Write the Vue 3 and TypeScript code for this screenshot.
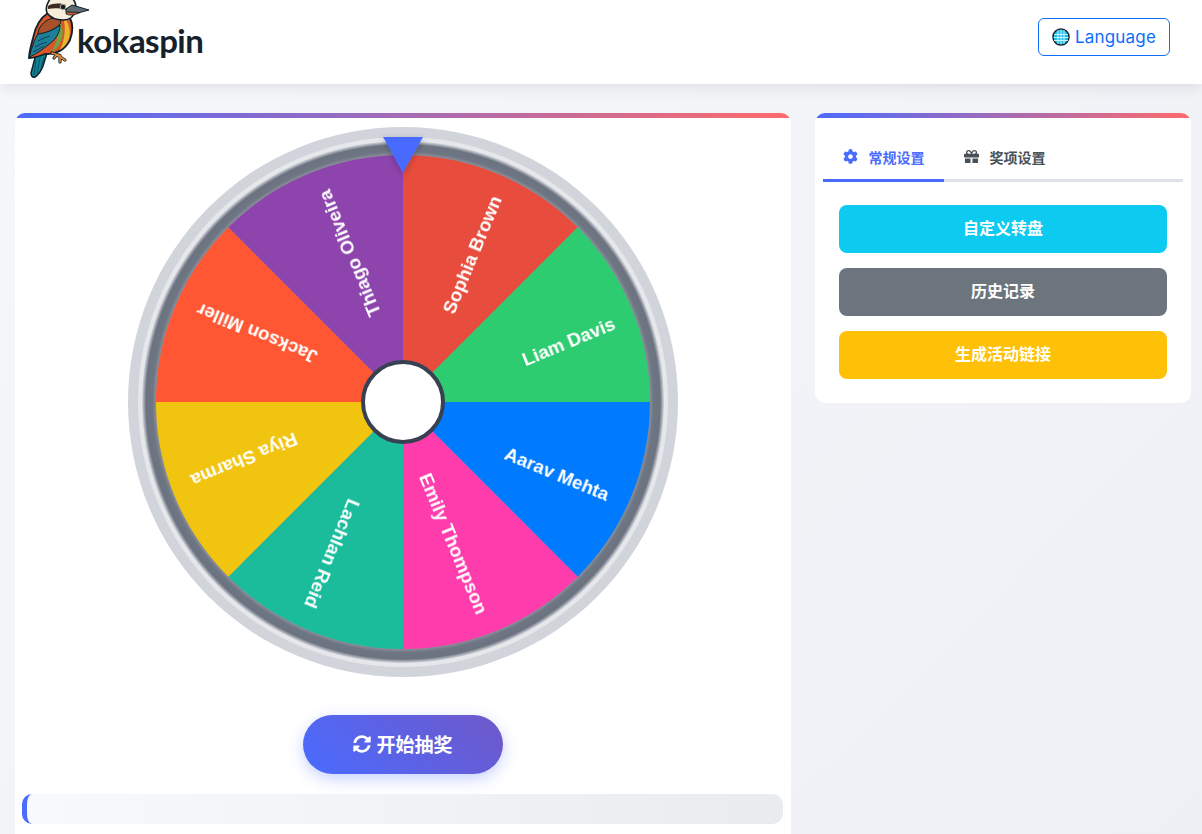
<script setup lang="ts">
interface Seg { name: string; color: string }
const segs: Seg[] = [
  { name: 'Sophia Brown', color: '#e74c3c' },
  { name: 'Liam Davis', color: '#2ecc71' },
  { name: 'Aarav Mehta', color: '#007bff' },
  { name: 'Emily Thompson', color: '#ff3cac' },
  { name: 'Lachlan Reid', color: '#1abc9c' },
  { name: 'Riya Sharma', color: '#f1c40f' },
  { name: 'Jackson Miller', color: '#ff5733' },
  { name: 'Thiago Oliveira', color: '#8e44ad' },
]
const R = 247
function pt(deg: number): string {
  const a = (deg * Math.PI) / 180
  return `${(R * Math.cos(a)).toFixed(2)} ${(R * Math.sin(a)).toFixed(2)}`
}
const sectors = segs.map((s, i) => {
  const start = -90 + i * 45
  return {
    ...s,
    d: `M0 0 L${pt(start)} A${R} ${R} 0 0 1 ${pt(start + 45)} Z`,
    rot: `rotate(${start + 22.5})`,
  }
})
const tabs = ['常规设置', '奖项设置']
</script>

<template>
  <div class="page">
    <header class="topbar">
      <div class="brand">
        <svg class="bird" width="66" height="80" viewBox="24 0 66 80">
          <path d="M36 54 31 73Q31 78 35 77 40 74 43 66L47 53Z" fill="#0f8494" stroke="#10212b" stroke-width="1.500"/>
          <path d="M36 60 34 75M40 58 37 74M44 57 41 69" stroke="#0b4f62" stroke-width="1" fill="none"/>
          <path d="M48 13C40 18 35 28 33 38 31 46 29 52 29 58 34 58 40 56 45 54 55 55 65 50 70 40 73 32 73 24 70 18Z" fill="#d9562a" stroke="#10212b" stroke-width="1.800"/>
          <path d="M66 20C70 26 71 34 68 41 66 45 63 48 60 50 64 42 66 30 64 21Z" fill="#e9b52f"/>
          <path d="M60 22C65 30 63 42 55 50L51 52C57 44 60 32 57 23Z" fill="#6fa544"/>
          <path d="M38 32C40 25 46 19 54 18 59 18 62 20 60 24 56 29 46 33 38 36Z" fill="#a8502a" stroke="#10212b" stroke-width="1"/>
          <path d="M29.500 57C32 46 35 38 38 34 46 33 54 30 60 25 60 34 55 40 48 45 42 50 36 54 29.500 57Z" fill="#1e7f99" stroke="#10212b" stroke-width="1"/>
          <path d="M38 41 44 38 50 36M35 47 41 44 47 42M33 52 39 49 44 46" stroke="#0e4258" stroke-width="1" fill="none"/>
          <path d="M52 53 60 55.500M57 55 65 60M60 56 60 62M57 54.500 54 58" stroke="#10212b" stroke-width="3.200" fill="none" stroke-linecap="round"/>
          <path d="M52 53 60 55.500M57 55 65 60M60 56 60 62M57 54.500 54 58" stroke="#e38a35" stroke-width="1.600" fill="none" stroke-linecap="round"/>
          <path d="M47 5C49 0 50-2 52-2L72-2C76 2 77 8 74 14 72 18 68 20 63 20 56 20 50 17 47 13 46 10 46 8 47 5Z" fill="#f6eeda" stroke="#10212b" stroke-width="1.600"/>
          <path d="M48 6C53 3 60 3 66 5L66 10C60 8 54 8 48 9Z" fill="#3c2b20"/>
          <circle cx="63" cy="7" r="2.800" fill="#10212b" stroke="#d9cdb0" stroke-width=".8"/>
          <path d="M66 9 72 5 89 10 78 13 66 12Z" fill="#5d6b73" stroke="#10212b" stroke-width="1"/>
          <path d="M66 12 80 12.500C76 15 70 16 66 14Z" fill="#c8612d" stroke="#10212b" stroke-width=".8"/>
        </svg>
        <span class="wordmark">kokaspin</span>
      </div>
      <button class="lang" type="button">
        <svg width="18" height="18" viewBox="0 0 18 18" class="globe">
          <circle cx="9" cy="9" r="8" fill="#1ec2ee" stroke="#10212b" stroke-width="1.500"/>
          <path d="M2 6.500h14M1.500 9.500h15M2 12.500h14M6 2v14M9 1.500v15M12 2v14" stroke="#d8f6ff" stroke-width=".9" fill="none"/>
        </svg>
        Language
      </button>
    </header>

    <main class="content">
      <section class="card wheel-card">
        <svg class="wheel" width="552" height="552" viewBox="-276 -276 552 552">
          <defs>
            <radialGradient id="rim" gradientUnits="userSpaceOnUse" cx="0" cy="0" r="261">
              <stop offset="0.945" stop-color="#8d929c"/>
              <stop offset="0.96" stop-color="#6f7683"/>
              <stop offset="0.985" stop-color="#6b7280"/>
              <stop offset="1" stop-color="#d5d8dd"/>
            </radialGradient>
            <filter id="txt" x="-10%" y="-30%" width="120%" height="160%">
              <feGaussianBlur stdDeviation="0.350"/>
            </filter>
            <filter id="pshadow" x="-40%" y="-40%" width="180%" height="180%">
              <feDropShadow dx="0" dy="2" stdDeviation="3" flood-color="#000" flood-opacity="0.25"/>
            </filter>
          </defs>
          <circle r="275" fill="#d1d5db"/>
          <circle r="265" fill="#e5e7eb"/>
          <circle r="261" fill="url(#rim)"/>
          <path v-for="s in sectors" :key="s.name" :d="s.d" :fill="s.color"/>
          <g v-for="s in sectors" :key="s.name + 't'" :transform="s.rot">
            <text class="seg-text" x="225.500" y="14" text-anchor="end" filter="url(#txt)">{{ s.name }}</text>
          </g>
          <circle r="40" fill="#fff" stroke="#374151" stroke-width="4"/>
          <path d="M-20 -265h40L0 -229z" fill="#4a6bff" filter="url(#pshadow)"/>
        </svg>
        <button class="spin" type="button">
          <svg width="18" height="18" viewBox="0 0 512 512"><path fill="#fff" d="M370.700 133.300C339.500 104 298.900 88 255.800 88c-77.500.1-144.300 53.200-162.800 126.900-1.300 5.400-6.100 9.200-11.700 9.200H24.100c-7.500 0-13.200-6.800-11.800-14.200C33.900 94.900 134.800 8 256 8c66.400 0 126.800 26.100 171.300 68.700L463 41c15.100-15.100 41-4.400 41 17v134c0 13.300-10.700 24-24 24H346c-21.400 0-32.100-25.900-17-41zM32 296h134c21.400 0 32.100 25.900 17 41l-41.800 41.800c31.300 29.300 71.900 45.300 115 45.200 77.400-.1 144.300-53.100 162.800-126.800 1.300-5.400 6.100-9.200 11.700-9.200h57.300c7.500 0 13.200 6.800 11.800 14.200C478.100 417.100 377.200 504 256 504c-66.400 0-126.800-26.100-171.300-68.700L49 471c-15.100 15.100-41 4.400-41-17V320c0-13.300 10.700-24 24-24z"/></svg>
          <span>开始抽奖</span>
        </button>
        <div class="progress"></div>
      </section>

      <aside class="card side-card">
        <div class="tabs">
          <div class="tab active">
            <svg width="15" height="15" viewBox="0 0 512 512"><path fill="currentColor" d="M487.400 315.700l-42.600-24.600c4.300-23.200 4.300-47 0-70.200l42.600-24.600c4.900-2.800 7.100-8.600 5.500-14-11.100-35.600-30-67.800-54.700-94.600-3.800-4.100-10-5.100-14.800-2.300L380.800 110c-17.900-15.400-38.500-27.300-60.800-35.100V25.800c0-5.600-3.900-10.500-9.400-11.700-36.700-8.200-74.300-7.800-109.200 0-5.500 1.200-9.400 6.100-9.400 11.700V75c-22.200 7.900-42.800 19.800-60.800 35.100L88.700 85.500c-4.900-2.800-11-1.900-14.800 2.300-24.700 26.700-43.600 58.900-54.700 94.600-1.700 5.400.6 11.200 5.500 14L67.300 221c-4.300 23.200-4.300 47 0 70.200l-42.600 24.600c-4.900 2.800-7.100 8.600-5.500 14 11.100 35.600 30 67.800 54.700 94.600 3.800 4.100 10 5.100 14.800 2.300l42.600-24.600c17.900 15.400 38.500 27.300 60.800 35.100v49.200c0 5.600 3.900 10.500 9.400 11.700 36.700 8.200 74.300 7.800 109.200 0 5.500-1.200 9.400-6.100 9.400-11.700v-49.200c22.200-7.900 42.800-19.800 60.800-35.100l42.600 24.600c4.900 2.800 11 1.900 14.800-2.300 24.700-26.700 43.600-58.900 54.700-94.600 1.500-5.500-.7-11.300-5.600-14.100zM256 336c-44.100 0-80-35.900-80-80s35.900-80 80-80 80 35.900 80 80-35.900 80-80 80z"/></svg>
            <span>{{ tabs[0] }}</span>
          </div>
          <div class="tab">
            <svg width="15" height="15" viewBox="0 0 512 512"><path fill="currentColor" d="M32 448c0 17.700 14.300 32 32 32h160V320H32v128zm256 32h160c17.700 0 32-14.300 32-32V320H288v160zm192-320h-42.100c6.200-12.100 10.100-25.500 10.100-40 0-48.500-39.500-88-88-88-41.600 0-68.500 21.300-103 68.300-34.500-47-61.400-68.300-103-68.300-48.500 0-88 39.500-88 88 0 14.500 3.800 27.900 10.100 40H32c-17.700 0-32 14.300-32 32v80c0 8.800 7.200 16 16 16h480c8.800 0 16-7.200 16-16v-80c0-17.700-14.300-32-32-32zm-326.100 0c-22.100 0-40-17.900-40-40s17.900-40 40-40c19.900 0 34.600 3.300 86.100 80h-86.100zm206.100 0h-86.100c51.400-76.500 65.700-80 86.100-80 22.100 0 40 17.900 40 40s-17.900 40-40 40z"/></svg>
            <span>{{ tabs[1] }}</span>
          </div>
        </div>
        <div class="actions">
          <button class="action cyan" type="button">自定义转盘</button>
          <button class="action gray" type="button">历史记录</button>
          <button class="action amber" type="button">生成活动链接</button>
        </div>
      </aside>
    </main>
  </div>
</template>

<style>
html, body { margin: 0; padding: 0; height: 834px; overflow: hidden; }
</style>

<style scoped>
.page {
  height: 834px;
  overflow: hidden;
  background: linear-gradient(135deg, #f5f7fa 0%, #eef0f5 100%);
  font-family: Inter, "Noto Sans CJK SC", sans-serif;
}
.topbar {
  height: 84px;
  box-sizing: border-box;
  background: #fff;
  box-shadow: 0 2px 15px rgba(0, 0, 0, 0.1);
  display: flex;
  align-items: flex-start;
  justify-content: space-between;
  padding: 0 32px 0 24px;
}
.brand { display: flex; align-items: flex-start; height: 84px; overflow: hidden; }
.bird { display: block; flex: none; }
.wordmark {
  font-family: Lato, sans-serif;
  font-weight: 700;
  font-size: 33px;
  line-height: 40px;
  letter-spacing: -0.5px;
  color: #16222b;
  margin: 20px 0 0 -13px;
}
.lang {
  margin-top: 18px;
  width: 132px;
  height: 38px;
  box-sizing: border-box;
  border: 1px solid #0d6efd;
  border-radius: 6px;
  background: #fff;
  color: #0d6efd;
  font: 400 17px Inter, sans-serif;
  letter-spacing: 0.2px;
  display: flex;
  align-items: center;
  justify-content: center;
  gap: 5px;
  padding: 0;
}
.globe { flex: none; }
.content {
  display: flex;
  align-items: flex-start;
  gap: 24px;
  padding: 29px 11px 0 15px;
}
.card {
  background: #fff;
  border-radius: 10px;
  position: relative;
  overflow: hidden;
  box-sizing: border-box;
  flex: none;
}
.card::before {
  content: "";
  display: block;
  align-self: stretch;
  height: 5px;
  background: linear-gradient(90deg, #4a6bff, #ff6b6b);
}
.wheel-card {
  width: 776px;
  height: 760px;
  display: flex;
  flex-direction: column;
  align-items: center;
}
.wheel { display: block; margin-top: 8px; flex: none; }
.seg-text {
  font-family: "Liberation Sans", Arial, sans-serif;
  font-weight: 700;
  font-size: 18.7px;
  fill: #fff;
}
.spin {
  margin-top: 37px;
  width: 200px;
  height: 59px;
  border: 0;
  border-radius: 30px;
  background: linear-gradient(45deg, #4a6bff, #6f58c9);
  box-shadow: 0 5px 15px rgba(74, 107, 255, 0.3);
  color: #fff;
  font: 700 19px Inter, "Noto Sans CJK SC", sans-serif;
  display: flex;
  align-items: center;
  justify-content: center;
  gap: 5px;
  padding: 0 0 2px;
  box-sizing: border-box;
}
.progress {
  margin-top: 20px;
  align-self: flex-start;
  margin-left: 7px;
  width: 761px;
  height: 30px;
  box-sizing: border-box;
  border-left: 5px solid #4a6bff;
  border-radius: 10px;
  background: linear-gradient(90deg, #f8f9fa, #e9ecef);
  flex: none;
}
.side-card { width: 376px; padding-bottom: 24px; }
.tabs {
  margin: 16px 8px 0;
  height: 45px;
  box-sizing: content-box;
  display: flex;
  border-bottom: 3px solid #dee2e6;
}
.tab {
  width: 121px;
  height: 48px;
  flex: none;
  box-sizing: border-box;
  display: flex;
  align-items: center;
  justify-content: center;
  gap: 11px;
  border-bottom: 3px solid transparent;
  font-size: 14px;
  font-weight: 700;
  color: #495057;
}
.tab.active { color: #4a6bff; border-bottom-color: #4a6bff; }
.actions {
  display: flex;
  flex-direction: column;
  gap: 15px;
  padding: 23px 24px 0;
}
.action {
  height: 48px;
  border: 0;
  border-radius: 8px;
  color: #fff;
  font: 700 16px Inter, "Noto Sans CJK SC", sans-serif;
  padding: 0 0 4px;
}
.cyan { background: #0dcaf0; }
.gray { background: #6c757d; }
.amber { background: #ffc107; }
</style>
